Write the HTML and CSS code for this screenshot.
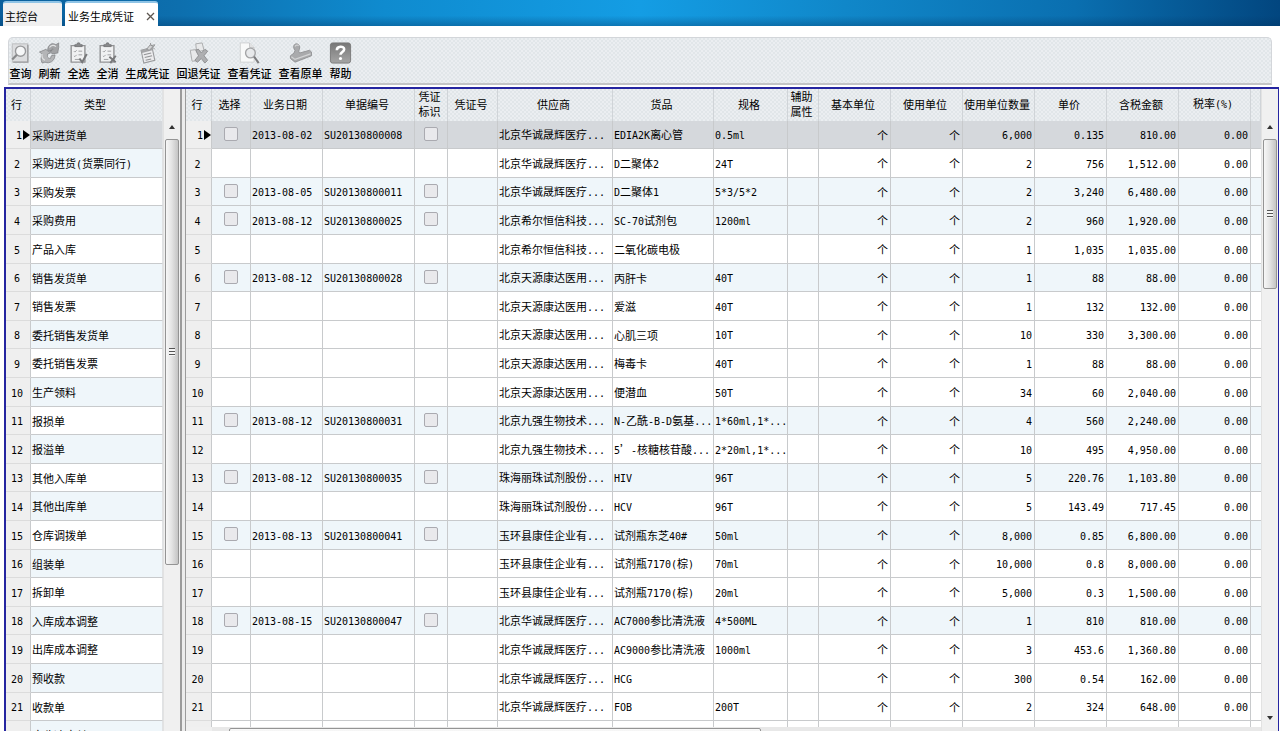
FILE: index.html
```html
<!DOCTYPE html>
<html lang="zh-CN">
<head>
<meta charset="utf-8">
<title>业务生成凭证</title>
<link rel="stylesheet" href="styles.css">
</head>
<body>
<div class="app">
  <nav class="tabs">
    <button class="tab tab-idle" type="button">主控台</button>
    <div class="tab tab-active"><span>业务生成凭证</span><button class="tab-close" type="button" aria-label="关闭"><svg width="9" height="9" viewBox="0 0 9 9"><path d="M1 1l7 7M8 1l-7 7" stroke="#5d5650" stroke-width="1.3"/></svg></button></div>
  </nav>
  <main class="panel">
    <div class="toolbar">
      <button class="tool" type="button">
        <svg class="icon" viewBox="0 0 24 24"><path d="M3 2h17v20H3z" fill="#dcdddf" stroke="#b9babc"/><path d="M20 3v19H4" fill="none" stroke="#9b9c9e" stroke-width="1.5"/><circle cx="12" cy="10" r="5.5" fill="#f6f7f8" stroke="#98999b" stroke-width="1.5"/><path d="M8 14l-5 5" stroke="#88898b" stroke-width="2.4"/></svg>
        <span>查询</span></button>
      <button class="tool" type="button">
        <svg class="icon" viewBox="0 0 24 24"><path d="M10 9c0-6 5-9 9-6l3-2v5l-1 6-6 1-3-3 4-2c-1-1-2 0-2 2z" fill="#a2a3a5" stroke="#808183" stroke-width=".8"/><path d="M1 11l7-3 5 4-3 1c-1 4 1 5 3 5l1-3 4-1c0 7-6 10-11 8l-3 1c-2-4-1-7 0-10z" fill="#b4b5b7" stroke="#808183" stroke-width=".8"/><path d="M12 6c2-3 5-3 7-1M4 13c-1 4 1 6 3 7" fill="none" stroke="#e2e3e4" stroke-width="1.3"/></svg>
        <span>刷新</span></button>
      <button class="tool" type="button">
        <svg class="icon" viewBox="0 0 24 24"><path d="M4 4h15v18H4z" fill="#f0f1f2" stroke="#929395" stroke-width="1.5"/><path d="M8 5V3h2l1-2h2l1 2h2v2z" fill="#898a8c" stroke="#747577"/><path d="M7 10l1 1 2-2M7 15l1 1 2-2M12 10h4M12 14h4M8 19h5" fill="none" stroke="#999a9c"/><path d="M13 18l3 4 5-9" fill="none" stroke="#77787a" stroke-width="2.2"/></svg>
        <span>全选</span></button>
      <button class="tool" type="button">
        <svg class="icon" viewBox="0 0 24 24"><path d="M4 4h15v18H4z" fill="#f0f1f2" stroke="#929395" stroke-width="1.5"/><path d="M8 5V3h2l1-2h2l1 2h2v2z" fill="#898a8c" stroke="#747577"/><path d="M7 10l1 1 2-2M7 15l1 1 2-2M12 10h4M12 14h4M8 19h5" fill="none" stroke="#999a9c"/><path d="M14 16l7 6M21 15l-6 8" fill="none" stroke="#77787a" stroke-width="2.2"/></svg>
        <span>全消</span></button>
      <button class="tool tool-wide" type="button">
        <svg class="icon" viewBox="0 0 24 24"><path d="M5 9l12-3 3 14-12 3z" fill="#ececee" stroke="#9a9b9d" stroke-width="1.2"/><path d="M5 9l12-3 .5 3L6 12z" fill="#a5a6a8"/><path d="M8 14l8-2M9 17l8-2M10 20l6-1.5" stroke="#939496" stroke-width="1.2"/><path d="M11 8l4-5 3 2-4 4zM15 1l1 3 4-1-2 3 2 2" fill="#d4d5d6" stroke="#8f9092"/></svg>
        <span>生成凭证</span></button>
      <button class="tool tool-wide" type="button">
        <svg class="icon" viewBox="0 0 24 24"><path d="M9 2l7-1 2 8-8 2zM3 9l9-1 1 12-8 1z" fill="#e8e9ea" stroke="#a7a8aa"/><path d="M9 9l3-1 3 4 4-4 3 2-4 5 4 5-3 3-4-5-4 4-3-2 4-5z" fill="#aeafb1" stroke="#8d8e90"/></svg>
        <span>回退凭证</span></button>
      <button class="tool tool-wide" type="button">
        <svg class="icon" viewBox="0 0 24 24"><path d="M2 1h10l5 5v16H2z" fill="#f8f9f9" stroke="#ced0d1"/><path d="M12 1v5h5" fill="#e1e2e3" stroke="#c5c6c8"/><circle cx="13" cy="12" r="5.3" fill="#e7e9eb" stroke="#a3a4a6" stroke-width="1.5"/><path d="M17 16l5 7" stroke="#7b7c7e" stroke-width="2.2"/></svg>
        <span>查看凭证</span></button>
      <button class="tool tool-wide" type="button">
        <svg class="icon" viewBox="0 0 24 24"><path d="M1 15l4-3 1-3c-4-5 1-9 4-6 2 2 1 5 0 7l1 2 11-3 2 2v4L6 22l-5-4z" fill="#a9aaac" stroke="#929395"/><path d="M2 16l4 3 17-6M6 5c1-2 3-2 4-1" fill="none" stroke="#d3d4d5" stroke-width="1.3"/></svg>
        <span>查看原单</span></button>
      <button class="tool" type="button">
        <svg class="icon" viewBox="0 0 24 24"><defs><linearGradient id="help" x2="0" y2="1"><stop stop-color="#777"/><stop offset="1" stop-color="#a5a5a5"/></linearGradient></defs><rect x="1" y="1" width="22" height="22" rx="2.5" fill="url(#help)" stroke="#777"/><path d="M8 9c0-5 8-5 8-1 0 3-4 3-4 6" fill="none" stroke="#fff" stroke-width="2.8"/><circle cx="12" cy="18" r="1.7" fill="#fff"/></svg>
        <span>帮助</span></button>
    </div>
    <div class="workspace">
      <section class="pane pane-types">
        <div class="viewport">
          <table class="grid types">
            <colgroup><col class="w-type-no"><col></colgroup>
            <thead><tr><th>行</th><th>类型</th></tr></thead>
            <tbody id="types"></tbody>
          </table>
        </div>
        <div class="vbar"><i class="arrow up"></i><div class="track"><div class="thumb thumb-tall"><i class="grip"></i></div></div></div>
      </section>
      <div class="splitter"></div>
      <section class="pane pane-docs">
        <div class="docs-main">
          <div class="viewport">
            <table class="grid docs">
              <colgroup><col class="w-no"><col class="w-pick"><col class="w-unit"><col class="w-code"><col class="w-flag"><col class="w-voucher"><col class="w-vendor"><col class="w-goods"><col class="w-spec"><col class="w-extra"><col class="w-unit"><col class="w-unit"><col class="w-unit"><col class="w-unit"><col class="w-unit"><col class="w-unit"><col></colgroup>
              <thead><tr><th>行</th><th>选择</th><th>业务日期</th><th>单据编号</th><th>凭证<br>标识</th><th>凭证号</th><th>供应商</th><th>货品</th><th>规格</th><th>辅助<br>属性</th><th>基本单位</th><th>使用单位</th><th>使用单位数量</th><th>单价</th><th>含税金额</th><th>税率<span class="latin">(%)</span></th><th></th></tr></thead>
              <tbody id="docs"></tbody>
            </table>
          </div>
          <div class="hbar"><div class="hthumb"></div></div>
        </div>
        <div class="vbar"><i class="arrow up"></i><div class="track"><div class="thumb thumb-short"><i class="grip"></i></div></div><i class="arrow down"></i></div>
      </section>
    </div>
  </main>
</div>
<script src="app.js"></script>
</body>
</html>
```
FILE: styles.css
```css
* { box-sizing: border-box; }
body {
  margin: 0;
  overflow: hidden;
  color: #000;
  background: #fff;
  font: 11px/16px "Noto Sans CJK SC", sans-serif;
}
button { font: inherit; color: inherit; border: 0; padding: 0; background: none; }
.app { height: 100vh; display: flex; flex-direction: column; }

.tabs {
  flex: none;
  height: 26px;
  display: flex;
  align-items: flex-end;
  gap: 3px;
  padding-left: 3px;
  background:
    linear-gradient(transparent 60%, rgba(0, 50, 95, .35)),
    linear-gradient(90deg, #0a5f9c 0, #0d6fae 14%, #0f8bcf 30%, #149de4 50%, #1087c9 66%, #0a6fb0 84%, #02467f 100%);
}
.tab { border-radius: 3px 3px 0 0; border-top: 2px solid #8fc4e6; white-space: nowrap; text-align: left; }
.tab-idle { width: 59px; height: 25px; padding: 3px 0 0 2px; background: #f0f0f0; }
.tab-active { width: 93px; height: 25px; display: flex; align-items: center; justify-content: space-between; padding: 3px 3px 0; background: #fff; }
.tab-close { width: 9px; height: 16px; display: flex; align-items: center; }

.panel { flex: 1; min-height: 0; display: flex; flex-direction: column; background: #fff; }
.toolbar {
  flex: none;
  margin: 11px 8px 0;
  height: 48px;
  display: flex;
  gap: 6px;
  padding-top: 4px;
  border: 1px solid #d3d6da;
  border-bottom: 2px solid #c3c4c5;
  border-radius: 5px 5px 0 0;
}
.toolbar, .grid th {
  background: repeating-conic-gradient(#e1e6e9 0 25%, #ebeef1 0 50%) 0 0 / 4px 4px;
}
.tool { flex: none; width: 23px; display: flex; flex-direction: column; align-items: center; white-space: nowrap; font-weight: 500; }
.tool-wide { width: 45px; }
.icon { width: 23px; height: 23px; display: block; }
.tool span { line-height: 19px; }

.workspace {
  flex: 1 0 auto;
  height: 0;
  margin: 2px 1px -13px 4px;
  border: 2px solid #2525a0;
  border-width: 2px 1px 0 2px;
  display: flex;
  background: #f0f0f0;
}
.pane { display: flex; min-width: 0; min-height: 0; }
.pane-types { flex: 0 0 174px; }
.pane-docs { flex: 1; }
.docs-main { flex: 1; min-width: 0; display: flex; flex-direction: column; }
.viewport { flex: 1; min-width: 0; min-height: 0; overflow: hidden; }
.splitter { flex: 0 0 6px; background: #ececec; border: solid #9b9b9b; border-width: 0 1px 0 2px; }

.grid { width: 100%; table-layout: fixed; border-collapse: separate; border-spacing: 0; }
.grid th { height: 32px; padding: 0 3px 2px 0; border-right: 1px solid #d0d4d8; font-weight: 400; line-height: 15px; white-space: nowrap; }
.grid td { height: 29px; padding: 0 1px; border: solid #c8cacc; border-width: 0 1px 1px 0; white-space: nowrap; overflow: hidden; background: #fff; line-height: 16px; }
.grid tr:nth-child(5n+1) td, .grid tr:nth-child(5n+3) td { height: 28px; }
.grid td:last-child { border-right: 0; }
.types td:last-child, .types th:last-child { border-right: 1px solid #e0e2e4; }
.grid .tint td { background: #eff6fa; }
.grid .selected td { background: #d5d8dc; }
.grid tbody td.no { background: #efefef; text-align: center; padding-right: 3px; border-bottom-color: #dcdcdc; }
.grid tbody .selected td.no { text-align: right; padding: 0; }
.no i { display: inline-block; border: solid transparent; border-width: 5px 0 5px 7px; border-left-color: #000; vertical-align: -1px; margin-left: 1px; }
.grid .num { text-align: right; padding-right: 2px; }
.latin { font: 10px/15px "DejaVu Sans Mono", monospace; }
.check { appearance: none; display: block; width: 14px; height: 14px; margin: 0 auto 2px; border: 1px solid #aaaab0; border-radius: 2px; background: #e9e9ec; }

.w-type-no { width: 25px; }
.w-no { width: 26px; }
.w-pick { width: 39px; }
.w-unit { width: 72px; }
.w-code { width: 92px; }
.w-flag { width: 33px; }
.w-voucher { width: 50px; }
.w-vendor { width: 115px; }
.w-goods { width: 101px; }
.w-spec { width: 74px; }
.w-extra { width: 31px; }

.vbar { flex: 0 0 17px; display: flex; flex-direction: column; align-items: center; padding-top: 36px; background: #f0f0f0; border-left: 1px solid #e2e2e2; }
.track { flex: 1; width: 14px; padding-top: 7px; }
.arrow { border: solid transparent; border-width: 0 3px; }
.up { border-bottom: 4px solid #333; margin-bottom: 3px; }
.down { border-top: 4px solid #333; margin-bottom: 24px; }
.thumb { display: flex; align-items: center; justify-content: center; border: 1px solid #949494; border-radius: 2px; background: linear-gradient(90deg, #f7f7f7, #e5e5e5 45%, #c4c4c4); }
.thumb-tall { height: 426px; }
.thumb-short { height: 150px; }
.grip { width: 6px; height: 8px; background: repeating-linear-gradient(#555 0 1px, #f5f5f5 1px 3px); }
.hbar { flex: none; height: 17px; margin-left: 26px; padding: 1px 500px 1px 17px; background: #e8e8e8; }
.hthumb { height: 15px; border: 1px solid #949494; border-radius: 2px; background: linear-gradient(#fafafa, #d4d4d4); }
```
FILE: app.js
```js
const types = ["采购进货单", "采购进货(货票同行)", "采购发票", "采购费用", "产品入库", "销售发货单", "销售发票", "委托销售发货单", "委托销售发票", "生产领料", "报损单", "报溢单", "其他入库单", "其他出库单", "仓库调拨单", "组装单", "拆卸单", "入库成本调整", "出库成本调整", "预收款", "收款单", "应收冲应付"];

// date | document | supplier | goods | spec | quantity | price | amount
const docs = `2013-08-02|SU20130800008|北京华诚晟辉医疗...|EDIA2K离心管|0.5ml|6,000|0.135|810.00
||北京华诚晟辉医疗...|D二聚体2|24T|2|756|1,512.00
2013-08-05|SU20130800011|北京华诚晟辉医疗...|D二聚体1|5*3/5*2|2|3,240|6,480.00
2013-08-12|SU20130800025|北京希尔恒信科技...|SC-70试剂包|1200ml|2|960|1,920.00
||北京希尔恒信科技...|二氧化碳电极||1|1,035|1,035.00
2013-08-12|SU20130800028|北京天源康达医用...|丙肝卡|40T|1|88|88.00
||北京天源康达医用...|爱滋|40T|1|132|132.00
||北京天源康达医用...|心肌三项|10T|10|330|3,300.00
||北京天源康达医用...|梅毒卡|40T|1|88|88.00
||北京天源康达医用...|便潜血|50T|34|60|2,040.00
2013-08-12|SU20130800031|北京九强生物技术...|N-乙酰-B-D氨基...|1*60ml,1*...|4|560|2,240.00
||北京九强生物技术...|5’-核糖核苷酸...|2*20ml,1*...|10|495|4,950.00
2013-08-12|SU20130800035|珠海丽珠试剂股份...|HIV|96T|5|220.76|1,103.80
||珠海丽珠试剂股份...|HCV|96T|5|143.49|717.45
2013-08-13|SU20130800041|玉环县康佳企业有...|试剂瓶东芝40#|50ml|8,000|0.85|6,800.00
||玉环县康佳企业有...|试剂瓶7170(棕)|70ml|10,000|0.8|8,000.00
||玉环县康佳企业有...|试剂瓶7170(棕)|20ml|5,000|0.3|1,500.00
2013-08-15|SU20130800047|北京华诚晟辉医疗...|AC7000参比清洗液|4*500ML|1|810|810.00
||北京华诚晟辉医疗...|AC9000参比清洗液|1000ml|3|453.6|1,360.80
||北京华诚晟辉医疗...|HCG||300|0.54|162.00
||北京华诚晟辉医疗...|FOB|200T|2|324|648.00`.split("\n").map(line => line.split("|"));

const mark = text => String(text).replace(/[\x20-\x7e]+/g, run => `<span class="latin">${run}</span>`);
const cell = (text, kind = "") => `<td class="${kind}">${mark(text)}</td>`;
const rowNo = i => `<td class="no">${mark(i + 1)}${i ? "" : "<i></i>"}</td>`;
const check = label => `<td><input class="check" type="checkbox" aria-label="${label}"></td>`;

document.getElementById("types").innerHTML = types.map((name, i) =>
  `<tr class="${i === 0 ? "selected" : i % 2 ? "tint" : ""}">${rowNo(i)}${cell(name)}</tr>`).join("");

document.getElementById("docs").innerHTML = docs.map(([date, code, vendor, goods, spec, qty, price, amount], i) => {
  const tone = i === 0 ? "selected" : date ? "tint" : "";
  return `<tr class="${tone}">${rowNo(i)}${date ? check("选择") : cell("")}${cell(date)}${cell(code)}` +
    `${date ? check("凭证标识") : cell("")}${cell("")}${cell(vendor)}${cell(goods)}${cell(spec)}${cell("")}` +
    `${cell("个", "num")}${cell("个", "num")}${cell(qty, "num")}${cell(price, "num")}${cell(amount, "num")}${cell("0.00", "num")}${cell("")}</tr>`;
}).join("") + `<tr><td class="no"></td>${cell("").repeat(16)}</tr>`;
```
